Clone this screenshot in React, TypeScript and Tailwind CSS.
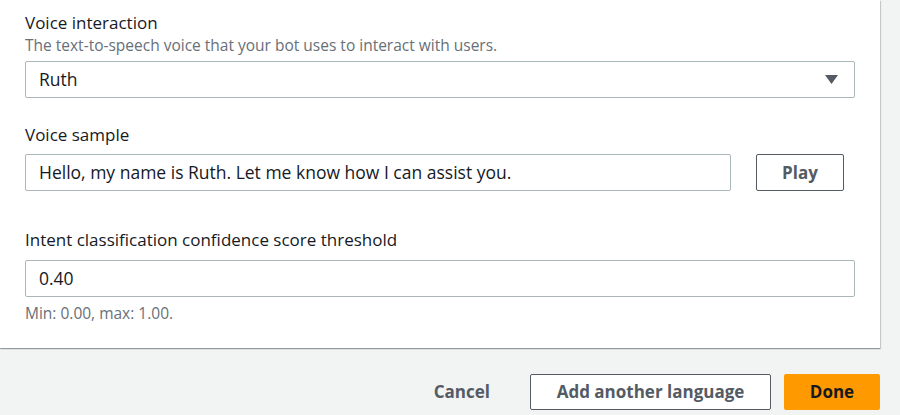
export default function App() {
  return (
    <div
      className="h-[415px] w-[900px] overflow-hidden bg-[#f2f3f3] text-[#16191f]"
      style={{ fontFamily: '"Open Sans", "Noto Sans", Arial, sans-serif' }}
    >
      <div className="w-[880px] bg-white pl-[25px] pr-[25px] pt-[11px] pb-[25px] shadow-[0_1px_1px_0_rgba(0,28,36,0.3),1px_1px_1px_0_rgba(0,28,36,0.15)]">
        <div className="text-[17px] leading-[24px]">Voice interaction</div>
        <div className="text-[15.5px] leading-[20px] text-[#687078]">
          The text-to-speech voice that your bot uses to interact with users.
        </div>
        <div className="mt-[6px] flex h-[37px] items-center justify-between rounded-[2px] border border-[#aab7b8] px-[13px] text-[17.5px]">
          <span>Ruth</span>
          <svg width="13" height="10" viewBox="0 0 13 10" className="mr-[3px]">
            <path d="M0 0h13L6.5 9z" fill="#545b64" />
          </svg>
        </div>

        <div className="mt-[25px] text-[17px] leading-[24px]">Voice sample</div>
        <div className="mt-[7px] flex items-center gap-[25px]">
          <div className="flex h-[37px] w-[706px] items-center rounded-[2px] border border-[#aab7b8] px-[13px] text-[17.5px]">
            Hello, my name is Ruth. Let me know how I can assist you.
          </div>
          <button
            type="button"
            className="flex h-[37px] w-[88px] items-center justify-center rounded-[2px] border border-[#545b64] text-[17px] font-bold text-[#545b64]"
          >
            Play
          </button>
        </div>

        <div className="mt-[37px] text-[17px] leading-[24px]">
          Intent classification confidence score threshold
        </div>
        <div className="mt-[8px] flex h-[37px] items-center rounded-[2px] border border-[#aab7b8] px-[13px] text-[17.5px]">
          0.40
        </div>
        <div className="mt-[6px] text-[15.5px] leading-[20px] text-[#687078]">
          Min: 0.00, max: 1.00.
        </div>
      </div>

      <div className="mt-[26px] flex w-[880px] items-center justify-end">
        <button type="button" className="mr-[40px] text-[17px] font-bold text-[#545b64]">
          Cancel
        </button>
        <button
          type="button"
          className="mr-[13px] flex h-[36px] w-[241px] items-center justify-center rounded-[2px] border border-[#545b64] bg-white text-[17px] font-bold text-[#545b64]"
        >
          Add another language
        </button>
        <button
          type="button"
          className="flex h-[36px] w-[96px] items-center justify-center rounded-[2px] bg-[#ff9900] text-[17px] font-bold text-[#16191f]"
        >
          Done
        </button>
      </div>
    </div>
  );
}
